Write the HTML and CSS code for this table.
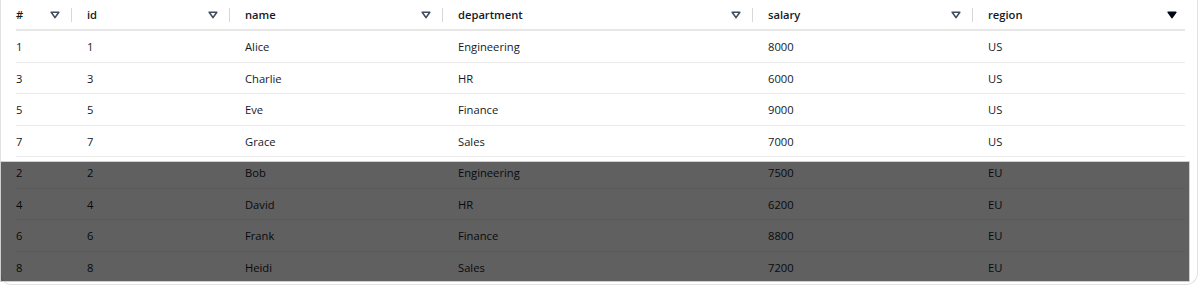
FILE: index.html
```html
<!DOCTYPE html>
<html lang="en">
<head>
<meta charset="utf-8">
<title>Table</title>
<link rel="stylesheet" href="styles.css">
</head>
<body>
<div class="card">
  <div class="table">
    <div class="row head">
      <div class="th"><span>#</span><svg class="sort" viewBox="0 0 10 8"><path d="M1.2 1.2 H8.8 L5 6.6 Z"/></svg></div>
      <div class="th"><span>id</span><svg class="sort" viewBox="0 0 10 8"><path d="M1.2 1.2 H8.8 L5 6.6 Z"/></svg></div>
      <div class="th"><span>name</span><svg class="sort" viewBox="0 0 10 8"><path d="M1.2 1.2 H8.8 L5 6.6 Z"/></svg></div>
      <div class="th"><span>department</span><svg class="sort" viewBox="0 0 10 8"><path d="M1.2 1.2 H8.8 L5 6.6 Z"/></svg></div>
      <div class="th"><span>salary</span><svg class="sort" viewBox="0 0 10 8"><path d="M1.2 1.2 H8.8 L5 6.6 Z"/></svg></div>
      <div class="th last"><span>region</span><svg class="sort active" viewBox="0 0 10 8"><path d="M1.2 1.2 H8.8 L5 6.6 Z"/></svg></div>
    </div>
    <div class="group">
      <div class="row"><div class="td">1</div><div class="td">1</div><div class="td">Alice</div><div class="td">Engineering</div><div class="td">8000</div><div class="td">US</div></div>
      <div class="row"><div class="td">3</div><div class="td">3</div><div class="td">Charlie</div><div class="td">HR</div><div class="td">6000</div><div class="td">US</div></div>
      <div class="row"><div class="td">5</div><div class="td">5</div><div class="td">Eve</div><div class="td">Finance</div><div class="td">9000</div><div class="td">US</div></div>
      <div class="row"><div class="td">7</div><div class="td">7</div><div class="td">Grace</div><div class="td">Sales</div><div class="td">7000</div><div class="td">US</div></div>
    </div>
    <div class="group dimmed">
      <div class="row"><div class="td">2</div><div class="td">2</div><div class="td">Bob</div><div class="td">Engineering</div><div class="td">7500</div><div class="td">EU</div></div>
      <div class="row"><div class="td">4</div><div class="td">4</div><div class="td">David</div><div class="td">HR</div><div class="td">6200</div><div class="td">EU</div></div>
      <div class="row"><div class="td">6</div><div class="td">6</div><div class="td">Frank</div><div class="td">Finance</div><div class="td">8800</div><div class="td">EU</div></div>
      <div class="row last-row"><div class="td">8</div><div class="td">8</div><div class="td">Heidi</div><div class="td">Sales</div><div class="td">7200</div><div class="td">EU</div></div>
      <div class="shade"></div>
    </div>
  </div>
</div>
</body>
</html>
```
FILE: styles.css
```css
* { box-sizing: border-box; }
html, body { margin: 0; background: #ffffff; }
body {
  font-family: "Open Sans", "Liberation Sans", sans-serif;
  font-size: 11.2px;
  color: #16191f;
}
.card {
  width: 1198px;
  height: 285px;
  border: 1px solid #e2e2e2;
  border-top: none;
  border-radius: 0 0 12px 12px;
}
.table { width: 1188px; }
.row {
  display: grid;
  grid-template-columns: 71px 158px 213px 310px 220px 216px;
  height: 31.5px;
  position: relative;
}
.row::after {
  content: "";
  position: absolute;
  left: 15px;
  right: 4px;
  bottom: 0;
  height: 1px;
  background: #ebebeb;
}
.row.last-row::after { display: none; }
.row.head { height: 31px; }
.row.head::after { height: 2px; background: #e6e6e6; }
.th {
  display: flex;
  align-items: center;
  justify-content: space-between;
  padding: 0 12px 2px 15px;
  font-weight: 600;
  position: relative;
}
.th::after {
  content: "";
  position: absolute;
  right: 0;
  top: 8px;
  height: 14px;
  width: 1px;
  background: #d5d8dc;
}
.th.last::after { display: none; }
.sort {
  width: 10px;
  height: 8px;
  fill: none;
  stroke: #414d5c;
  stroke-width: 1.6;
  stroke-linejoin: round;
}
.sort.active { fill: #000716; stroke: #000716; }
.td {
  display: flex;
  align-items: center;
  padding-left: 15px;
  white-space: nowrap;
}
.group { position: relative; }
.shade {
  position: absolute;
  left: 0;
  right: 0;
  top: 5px;
  bottom: 2px;
  background: rgba(0, 0, 0, 0.625);
  box-shadow: 0 0 0 1px #cfcfcf;
}
```
